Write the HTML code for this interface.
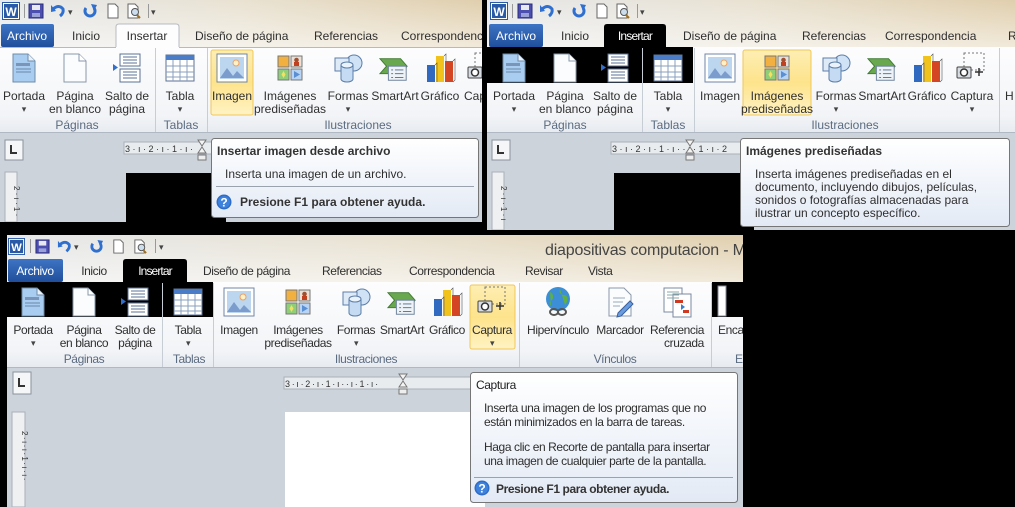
<!DOCTYPE html>
<html><head><meta charset="utf-8">
<style>
html,body{margin:0;padding:0;background:#000;width:1015px;height:507px;overflow:hidden}
svg{position:absolute;display:block}
text{font-family:"Liberation Sans",sans-serif;font-size:12px;fill:#2f2f2f}
.c{text-anchor:middle}
.g{fill:#5b6b80}
.w{fill:#fff}
.b{font-weight:bold}
.s{font-size:9px;fill:#444}
.cond text{letter-spacing:-0.4px}
</style></head><body>
<svg width="0" height="0" style="position:absolute">
<defs>
<linearGradient id="tb" x1="0" x2="1" y1="0" y2="0"><stop offset="0" stop-color="#e6e8ea"/><stop offset="0.5" stop-color="#e9e2d2"/><stop offset="1" stop-color="#e0cfae"/></linearGradient>
<linearGradient id="tbv" x1="0" x2="0" y1="0" y2="1"><stop offset="0" stop-color="#fff" stop-opacity="0"/><stop offset="1" stop-color="#fff" stop-opacity="0.55"/></linearGradient>
<linearGradient id="rb" x1="0" x2="0" y1="0" y2="1"><stop offset="0" stop-color="#fdfdfe"/><stop offset="0.8" stop-color="#f2f4f7"/><stop offset="1" stop-color="#e7ebf0"/></linearGradient>
<linearGradient id="ar" x1="0" x2="0" y1="0" y2="1"><stop offset="0" stop-color="#3e74c4"/><stop offset="1" stop-color="#1f4f9c"/></linearGradient>
<linearGradient id="hl" x1="0" x2="0" y1="0" y2="1"><stop offset="0" stop-color="#fdeeb3"/><stop offset="0.5" stop-color="#fde38b"/><stop offset="1" stop-color="#fff3c4"/></linearGradient>
<linearGradient id="tt" x1="0" x2="0" y1="0" y2="1"><stop offset="0" stop-color="#ffffff"/><stop offset="1" stop-color="#e3eaf5"/></linearGradient>
<symbol id="iW" viewBox="0 0 18 18"><rect x="0.5" y="0.5" width="17" height="17" fill="#fff" stroke="#2a5aa6"/><rect x="2" y="2" width="14" height="14" fill="#2a5aa6"/><text x="9" y="14" class="c w b" style="font-size:12px">W</text></symbol>
<symbol id="iSave" viewBox="0 0 16 16"><rect x="1" y="1" width="14" height="14" fill="#4d4fb0" stroke="#2a2c7a"/><rect x="4" y="2" width="8" height="5" fill="#e8e8f0"/><rect x="4" y="10" width="8" height="4" fill="#9aa0d8"/></symbol>
<symbol id="iUndo" viewBox="0 0 16 16"><path d="M3 6 Q9 1 13 6 Q14 10 10 13" fill="none" stroke="#2f6fcf" stroke-width="3"/><path d="M1 2 L6 8 L1 9z" fill="#2f6fcf"/></symbol>
<symbol id="iRedo" viewBox="0 0 16 16"><path d="M12 5 A5 5 0 1 1 4 5" fill="none" stroke="#2f6fcf" stroke-width="3"/><path d="M9 1 L15 2 L12 8z" fill="#2f6fcf"/></symbol>
<symbol id="iDoc" viewBox="0 0 16 16"><path d="M3 1h7l3 3v11H3z" fill="#fff" stroke="#666"/></symbol>
<symbol id="iPrev" viewBox="0 0 16 16"><path d="M2 1h7l3 3v11H2z" fill="#fff" stroke="#666"/><circle cx="9" cy="9" r="3.5" fill="#cde" stroke="#555"/><path d="M11 12l3 3" stroke="#a07020" stroke-width="2"/></symbol>
<symbol id="iPort" viewBox="0 0 32 32"><path d="M5 2h15l7 7v21H5z" fill="#a9cdf0" stroke="#6f8ba8"/><path d="M20 2v7h7" fill="#e8f1fa" stroke="#6f8ba8"/><rect x="8" y="11" width="14" height="3" fill="#7a95b8"/><path d="M8 17h15M8 20h15" stroke="#6c86a8"/></symbol>
<symbol id="iBlank" viewBox="0 0 32 32"><path d="M5 2h15l7 7v21H5z" fill="#fbfcfe" stroke="#8a97a8"/><path d="M20 2v7h7" fill="#fff" stroke="#8a97a8"/></symbol>
<symbol id="iSalto" viewBox="0 0 32 32"><rect x="9" y="2" width="20" height="12" fill="#fff" stroke="#5b7394"/><path d="M12 5h14M12 8h14M12 11h14" stroke="#5b7394"/><rect x="9" y="17" width="20" height="13" fill="#fff" stroke="#5b7394"/><path d="M12 20h14M12 23h14M12 26h14" stroke="#5b7394"/><path d="M2 12l5 3.5-5 3.5z" fill="#2f6fcf"/></symbol>
<symbol id="iTabla" viewBox="0 0 32 32"><rect x="2" y="3" width="28" height="26" fill="#fff" stroke="#5b7394"/><rect x="2" y="3" width="28" height="5" fill="#4a7cc8"/><path d="M2 14h28M2 20h28M2 25h28M9 8v21M16 8v21M23 8v21" stroke="#8aa0be"/></symbol>
<symbol id="iImg" viewBox="0 0 32 32"><rect x="1" y="2" width="30" height="28" fill="#fff" stroke="#6f86a6"/><rect x="4" y="5" width="24" height="22" fill="#bcd6ef"/><circle cx="20" cy="11" r="3" fill="#fff2c8" stroke="#f0a060"/><path d="M4 26 L11 16 L17 24 L21 19 L28 26z" fill="#7b9ccc"/></symbol>
<symbol id="iClip" viewBox="0 0 32 32"><rect x="4" y="4" width="11" height="11" fill="#f2b040" stroke="#777"/><rect x="17" y="4" width="11" height="11" fill="#e9e0d8" stroke="#777"/><circle cx="22.5" cy="8" r="2.3" fill="#a05030"/><rect x="20" y="10" width="5" height="4" fill="#c04020"/><rect x="4" y="17" width="11" height="11" fill="#8fcf7a" stroke="#777"/><path d="M9.5 19l2 3.5-2 3.5-2-3.5z" fill="#f6e060"/><rect x="17" y="17" width="11" height="11" fill="#b8d4f2" stroke="#777"/><path d="M20 19l6 3.5-6 3.5z" fill="#5a8fd4"/></symbol>
<symbol id="iFormas" viewBox="0 0 32 32"><circle cx="22" cy="11" r="8" fill="#cfe2f6" stroke="#5c7ea8"/><rect x="3" y="6" width="14" height="13" fill="#dfeaf7" stroke="#5c7ea8"/><path d="M9 13v14a6 3 0 0 0 12 0V13" fill="#c4dbf3" stroke="#5c7ea8"/><ellipse cx="15" cy="13" rx="6" ry="3" fill="#eaf3fc" stroke="#5c7ea8"/></symbol>
<symbol id="iSmart" viewBox="0 0 32 32"><path d="M1 5h22l7 8-7 8H1l7-8z" fill="#69a84f" stroke="#3f7a30"/><rect x="10" y="13" width="19" height="15" fill="#eef3f8" stroke="#6a7f98"/><path d="M13 17h2M17 17h9M13 21h2M17 21h9M13 25h2M17 25h9" stroke="#50698a"/></symbol>
<symbol id="iGraf" viewBox="0 0 32 32"><rect x="3" y="13" width="8" height="17" fill="#2f6ac0"/><rect x="12" y="4" width="8" height="26" fill="#f2c21c"/><rect x="21" y="9" width="8" height="21" fill="#d44524"/><path d="M11 13l2-2v19M20 4l2-2v7M29 9l2-2v21l-2 2" fill="none" stroke="#555" stroke-width="0.6"/></symbol>
<symbol id="iCapt" viewBox="0 0 32 32"><rect x="9" y="1" width="20" height="17" fill="none" stroke="#777" stroke-dasharray="2 2"/><rect x="2" y="15" width="14" height="11" rx="1" fill="#d8dde4" stroke="#444"/><circle cx="9" cy="20.5" r="3.5" fill="#fff" stroke="#333" stroke-width="1.5"/><path d="M20 20h8M24 16v8" stroke="#333" stroke-width="1.5"/></symbol>
<symbol id="iGlobe" viewBox="0 0 32 32"><circle cx="16" cy="13" r="12" fill="#3c8fd6"/><path d="M8 6q5 3 2 8q-4 2-1 6M18 3q-2 5 4 6q5 1 3 7q-3 3-1 6" fill="#5fb040"/><path d="M8 26a4 3 0 1 1 8 0a4 3 0 1 1-8 0M16 26a4 3 0 1 1 8 0a4 3 0 1 1-8 0" fill="none" stroke="#555" stroke-width="2"/></symbol>
<symbol id="iMarc" viewBox="0 0 32 32"><path d="M5 2h15l7 7v21H5z" fill="#fbfcfe" stroke="#8a97a8"/><path d="M9 12h12M9 16h10M9 20h7" stroke="#9ab"/><path d="M14 27l12-12 3 3-12 12-4 1z" fill="#6a9de0" stroke="#3a60a0"/></symbol>
<symbol id="iRef" viewBox="0 0 32 32"><rect x="3" y="2" width="18" height="24" fill="#fff" stroke="#7a8aa0"/><rect x="12" y="8" width="18" height="23" fill="#fff" stroke="#7a8aa0"/><path d="M6 6h12M6 9h12M6 12h12" stroke="#8aa"/><rect x="14" y="14" width="8" height="3" fill="#d03a20"/><rect x="22" y="24" width="6" height="3" fill="#d03a20"/><path d="M20 18l4 3-4 3z" fill="#3a7fd0"/></symbol>
<symbol id="iHelp" viewBox="0 0 16 16"><circle cx="8" cy="8" r="7.5" fill="#2d6cc8"/><circle cx="8" cy="8" r="6" fill="#3d82dc"/><text x="8" y="12.5" class="c w b" style="font-size:12px">?</text></symbol>
</defs></svg>

<!-- PANEL A -->
<svg style="left:0;top:0" width="482" height="222" viewBox="0 0 482 222">
<rect width="482" height="47" fill="url(#tb)"/><rect width="482" height="47" fill="url(#tbv)"/>
<use href="#iW" x="2" y="2" width="18" height="18"/>
<rect x="24" y="4" width="1" height="14" fill="#999"/>
<use href="#iSave" x="28" y="3" width="16" height="16"/>
<use href="#iUndo" x="50" y="3" width="16" height="16"/><text x="68" y="15" class="s">▾</text>
<use href="#iRedo" x="82" y="3" width="16" height="16"/>
<use href="#iDoc" x="105" y="3" width="16" height="16"/>
<use href="#iPrev" x="126" y="3" width="16" height="16"/>
<rect x="148" y="4" width="1" height="14" fill="#999"/><text x="151" y="15" class="s">▾</text>
<rect x="1" y="24" width="53" height="23" rx="2" fill="url(#ar)"/><text x="27" y="40" class="c w">Archivo</text>
<text x="86" y="40" class="c">Inicio</text>
<path d="M116 48V27q0-3 3-3h57q3 0 3 3v21" fill="#fdfdfe" stroke="#b6bac0"/><text x="147" y="40" class="c">Insertar</text>
<text x="195" y="40">Diseño de página</text>
<text x="314" y="40">Referencias</text>
<text x="401" y="40">Correspondencia</text>
<rect y="47" width="482" height="86" fill="url(#rb)"/><path d="M0 47.5h116M179 47.5h303" stroke="#b6bac0"/>
<rect y="132" width="482" height="1" fill="#b0b8c4"/>
<path d="M155.5 48v84M207.5 48v84" stroke="#c7cdd5"/>
<rect x="211" y="50" width="42" height="65" rx="2" fill="url(#hl)" stroke="#f0c75a"/>
<use href="#iPort" x="8" y="52" width="32" height="32"/>
<use href="#iBlank" x="59" y="52" width="32" height="32"/>
<use href="#iSalto" x="111" y="52" width="32" height="32"/>
<use href="#iTabla" x="164" y="52" width="32" height="32"/>
<use href="#iImg" x="216" y="52" width="32" height="32"/>
<use href="#iClip" x="274" y="52" width="32" height="32"/>
<use href="#iFormas" x="332" y="52" width="32" height="32"/>
<use href="#iSmart" x="378" y="54" width="32" height="30"/>
<use href="#iGraf" x="424" y="52" width="32" height="32"/>
<use href="#iCapt" x="466" y="52" width="32" height="32"/>
<text x="24" y="100" class="c">Portada</text><text x="24" y="112" class="c s">▾</text>
<text x="75" y="100" class="c">Página</text><text x="75" y="113" class="c">en blanco</text>
<text x="127" y="100" class="c">Salto de</text><text x="127" y="113" class="c">página</text>
<text x="180" y="100" class="c">Tabla</text><text x="180" y="112" class="c s">▾</text>
<text x="232" y="100" class="c">Imagen</text>
<text x="290" y="100" class="c">Imágenes</text><text x="290" y="113" class="c">prediseñadas</text>
<text x="348" y="100" class="c">Formas</text><text x="348" y="112" class="c s">▾</text>
<text x="395" y="100" class="c">SmartArt</text>
<text x="440" y="100" class="c">Gráfico</text>
<text x="464" y="100">Captura</text>
<text x="77" y="129" class="c g">Páginas</text><text x="181" y="129" class="c g">Tablas</text><text x="358" y="129" class="c g">Ilustraciones</text>
<rect y="133" width="482" height="89" fill="#cdd3da"/>
<rect x="5" y="140" width="18" height="20" fill="#f4f6f8" stroke="#8a939e"/><path d="M11 145v8h6" stroke="#333" stroke-width="2" fill="none"/>
<rect x="124" y="142" width="95" height="12" fill="#e9ecef" stroke="#a9b0b9"/>
<text x="125" y="152" style="font-size:9px;fill:#333">3 · ı · 2 · ı · 1 · ı ·</text>
<path d="M198 140h8l-4 6zM198 153h8l-4-6z" fill="#f4f4f4" stroke="#777"/><rect x="198" y="155" width="8" height="5" fill="#eee" stroke="#777"/>
<rect x="5" y="172" width="12" height="50" fill="#eef0f2" stroke="#a9b0b9"/>
<text x="14" y="186" style="font-size:8px;fill:#333" transform="rotate(90 14 186)">2 · ı · 1 ·</text>
<rect x="126" y="173" width="100" height="49" fill="#000"/>
<rect x="211.5" y="138.5" width="267" height="79" rx="3" fill="url(#tt)" stroke="#767676"/>
<text x="217" y="155" class="b" style="fill:#333">Insertar imagen desde archivo</text>
<text x="225" y="178">Inserta una imagen de un archivo.</text>
<rect x="216" y="186" width="258" height="1" fill="#9aa3ad"/>
<use href="#iHelp" x="216" y="194" width="16" height="16"/>
<text x="240" y="206" class="b" style="fill:#333">Presione F1 para obtener ayuda.</text>
</svg>

<!-- PANEL B -->
<svg style="left:487px;top:0" width="528" height="230" viewBox="0 0 528 230">
<rect width="528" height="47" fill="url(#tb)"/><rect width="528" height="47" fill="url(#tbv)"/>
<use href="#iW" x="3" y="2" width="18" height="18"/>
<rect x="25" y="4" width="1" height="14" fill="#999"/>
<use href="#iSave" x="30" y="3" width="16" height="16"/>
<use href="#iUndo" x="52" y="3" width="16" height="16"/><text x="70" y="15" class="s">▾</text>
<use href="#iRedo" x="84" y="3" width="16" height="16"/>
<use href="#iDoc" x="107" y="3" width="16" height="16"/>
<use href="#iPrev" x="128" y="3" width="16" height="16"/>
<rect x="150" y="4" width="1" height="14" fill="#999"/><text x="153" y="15" class="s">▾</text>
<rect x="2" y="24" width="54" height="23" rx="2" fill="url(#ar)"/><text x="29" y="40" class="c w">Archivo</text>
<text x="88" y="40" class="c">Inicio</text>
<path d="M117 48V27q0-3 3-3h56q3 0 3 3v21z" fill="#000"/><text x="148" y="40" class="c w" style="letter-spacing:-0.8px">Insertar</text>
<text x="196" y="40">Diseño de página</text>
<text x="315" y="40">Referencias</text>
<text x="398" y="40">Correspondencia</text>
<text x="521" y="40">R</text>
<rect y="47" width="528" height="86" fill="url(#rb)"/>
<rect y="47" width="206" height="36" fill="#000"/>
<rect y="132" width="528" height="1" fill="#b0b8c4"/>
<path d="M155.5 48v84M207.5 48v84M512.5 48v84" stroke="#c7cdd5"/>
<rect x="256" y="50" width="68" height="65" rx="2" fill="url(#hl)" stroke="#f0c75a"/>
<use href="#iPort" x="11" y="52" width="32" height="32"/>
<use href="#iBlank" x="62" y="52" width="32" height="32"/>
<use href="#iSalto" x="112" y="52" width="32" height="32"/>
<use href="#iTabla" x="165" y="52" width="32" height="32"/>
<use href="#iImg" x="217" y="52" width="32" height="32"/>
<use href="#iClip" x="274" y="52" width="32" height="32"/>
<use href="#iFormas" x="333" y="52" width="32" height="32"/>
<use href="#iSmart" x="379" y="54" width="32" height="30"/>
<use href="#iGraf" x="424" y="52" width="32" height="32"/>
<use href="#iCapt" x="468" y="52" width="32" height="32"/>
<text x="27" y="100" class="c">Portada</text><text x="27" y="112" class="c s">▾</text>
<text x="78" y="100" class="c">Página</text><text x="78" y="113" class="c">en blanco</text>
<text x="128" y="100" class="c">Salto de</text><text x="128" y="113" class="c">página</text>
<text x="181" y="100" class="c">Tabla</text><text x="181" y="112" class="c s">▾</text>
<text x="233" y="100" class="c">Imagen</text>
<text x="290" y="100" class="c">Imágenes</text><text x="290" y="113" class="c">prediseñadas</text>
<text x="349" y="100" class="c">Formas</text><text x="349" y="112" class="c s">▾</text>
<text x="395" y="100" class="c">SmartArt</text>
<text x="440" y="100" class="c">Gráfico</text>
<text x="485" y="100" class="c">Captura</text><text x="485" y="112" class="c s">▾</text>
<text x="518" y="100">H</text>
<text x="78" y="129" class="c g">Páginas</text><text x="181" y="129" class="c g">Tablas</text><text x="358" y="129" class="c g">Ilustraciones</text>
<rect y="133" width="528" height="97" fill="#cdd3da"/>
<rect x="5" y="140" width="18" height="20" fill="#f4f6f8" stroke="#8a939e"/><path d="M11 145v8h6" stroke="#333" stroke-width="2" fill="none"/>
<rect x="124" y="142" width="135" height="12" fill="#e9ecef" stroke="#a9b0b9"/>
<text x="125" y="152" style="font-size:9px;fill:#333">3 · ı · 2 · ı · 1 · ı ·    · ı · 1 · ı · 2</text>
<path d="M199 140h8l-4 6zM199 153h8l-4-6z" fill="#f4f4f4" stroke="#777"/><rect x="199" y="155" width="8" height="5" fill="#eee" stroke="#777"/>
<rect x="5" y="172" width="12" height="58" fill="#eef0f2" stroke="#a9b0b9"/>
<text x="14" y="186" style="font-size:8px;fill:#333" transform="rotate(90 14 186)">2 · ı · 1 · ı</text>
<rect x="127" y="173" width="140" height="57" fill="#000"/>
<rect x="253.5" y="138.5" width="269" height="88" rx="3" fill="url(#tt)" stroke="#767676"/>
<text x="259" y="155" class="b" style="fill:#333">Imágenes prediseñadas</text>
<text x="268" y="178">Inserta imágenes prediseñadas en el</text>
<text x="268" y="191">documento, incluyendo dibujos, películas,</text>
<text x="268" y="204">sonidos o fotografías almacenadas para</text>
<text x="268" y="217">ilustrar un concepto específico.</text>
</svg>

<!-- PANEL C -->
<svg class="cond" style="left:7px;top:235px" width="736" height="272" viewBox="0 0 736 272">
<rect width="736" height="47" fill="url(#tb)"/><rect width="736" height="47" fill="url(#tbv)"/>
<use href="#iW" x="1" y="3" width="17" height="17"/>
<rect x="23" y="4" width="1" height="14" fill="#999"/>
<use href="#iSave" x="28" y="4" width="15" height="15"/>
<use href="#iUndo" x="50" y="4" width="15" height="15"/><text x="67" y="15" class="s">▾</text>
<use href="#iRedo" x="82" y="4" width="15" height="15"/>
<use href="#iDoc" x="104" y="4" width="15" height="15"/>
<use href="#iPrev" x="126" y="4" width="15" height="15"/>
<rect x="148" y="4" width="1" height="14" fill="#999"/><text x="152" y="15" class="s">▾</text>
<text x="538" y="20" style="font-size:16px;fill:#444;letter-spacing:-0.2px">diapositivas computacion - M</text>
<rect x="1" y="24" width="55" height="23" rx="2" fill="url(#ar)"/><text x="28" y="40" class="c w">Archivo</text>
<text x="87" y="40" class="c">Inicio</text>
<path d="M116 48V27q0-3 3-3h58q3 0 3 3v21z" fill="#000"/><text x="148" y="40" class="c w" style="letter-spacing:-0.9px">Insertar</text>
<text x="196" y="40">Diseño de página</text>
<text x="315" y="40">Referencias</text>
<text x="402" y="40">Correspondencia</text>
<text x="518" y="40">Revisar</text>
<text x="581" y="40">Vista</text>
<rect y="47" width="736" height="86" fill="url(#rb)"/>
<rect y="47" width="206" height="35" fill="#000"/>
<rect x="705" y="47" width="31" height="35" fill="#000"/>
<rect y="132" width="736" height="1" fill="#b0b8c4"/>
<path d="M155.5 48v84M206.5 48v84M512.5 48v84M704.5 48v84" stroke="#c7cdd5"/>
<rect x="463" y="50" width="45" height="64" rx="2" fill="url(#hl)" stroke="#f0c75a"/>
<use href="#iPort" x="10" y="51" width="32" height="32"/>
<use href="#iBlank" x="61" y="51" width="32" height="32"/>
<use href="#iSalto" x="112" y="51" width="32" height="32"/>
<use href="#iTabla" x="165" y="51" width="32" height="32"/>
<use href="#iImg" x="216" y="51" width="32" height="32"/>
<use href="#iClip" x="275" y="51" width="32" height="32"/>
<use href="#iFormas" x="333" y="51" width="32" height="32"/>
<use href="#iSmart" x="379" y="53" width="32" height="30"/>
<use href="#iGraf" x="424" y="51" width="32" height="32"/>
<use href="#iCapt" x="469" y="51" width="32" height="32"/>
<use href="#iGlobe" x="535" y="51" width="32" height="32"/>
<use href="#iMarc" x="597" y="51" width="32" height="32"/>
<use href="#iRef" x="654" y="51" width="32" height="32"/>
<rect x="711" y="51" width="8" height="30" fill="#fff" stroke="#889"/>
<text x="26" y="99" class="c">Portada</text><text x="26" y="111" class="c s">▾</text>
<text x="77" y="99" class="c">Página</text><text x="77" y="112" class="c">en blanco</text>
<text x="128" y="99" class="c">Salto de</text><text x="128" y="112" class="c">página</text>
<text x="181" y="99" class="c">Tabla</text><text x="181" y="111" class="c s">▾</text>
<text x="232" y="99" class="c">Imagen</text>
<text x="291" y="99" class="c">Imágenes</text><text x="291" y="112" class="c">prediseñadas</text>
<text x="349" y="99" class="c">Formas</text><text x="349" y="111" class="c s">▾</text>
<text x="395" y="99" class="c">SmartArt</text>
<text x="440" y="99" class="c">Gráfico</text>
<text x="485" y="99" class="c">Captura</text><text x="485" y="111" class="c s">▾</text>
<text x="551" y="99" class="c">Hipervínculo</text>
<text x="613" y="99" class="c">Marcador</text>
<text x="670" y="99" class="c">Referencia</text><text x="677" y="112" class="c">cruzada</text>
<text x="711" y="99">Enca</text>
<text x="77" y="128" class="c g">Páginas</text><text x="182" y="128" class="c g">Tablas</text><text x="359" y="128" class="c g">Ilustraciones</text><text x="608" y="128" class="c g">Vínculos</text><text x="728" y="128" class="g">E</text>
<rect y="133" width="736" height="139" fill="#cdd3da"/>
<rect x="6" y="137" width="18" height="22" fill="#f4f6f8" stroke="#8a939e"/><path d="M12 143v8h6" stroke="#333" stroke-width="2" fill="none"/>
<rect x="277" y="142" width="190" height="12" fill="#e9ecef" stroke="#a9b0b9"/>
<text x="278" y="152" style="font-size:9px;fill:#333">3 · ı · 2 · ı · 1 · ı ·    · ı · 1 · ı ·</text>
<path d="M392 139h8l-4 6zM392 152h8l-4-6z" fill="#f4f4f4" stroke="#777"/><rect x="392" y="154" width="8" height="5" fill="#eee" stroke="#777"/>
<rect x="5" y="177" width="13" height="95" fill="#eef0f2" stroke="#a9b0b9"/>
<text x="15" y="196" style="font-size:8px;fill:#333" transform="rotate(90 15 196)">2 · ı · ı · 1 · ı · ı ·</text>
<rect x="278" y="177" width="200" height="95" fill="#fff"/>
<rect x="463.5" y="137.5" width="267" height="130" rx="3" fill="url(#tt)" stroke="#767676"/>
<text x="469" y="154" style="fill:#222">Captura</text>
<text x="477" y="177">Inserta una imagen de los programas que no</text>
<text x="477" y="191">están minimizados en la barra de tareas.</text>
<text x="477" y="216">Haga clic en Recorte de pantalla para insertar</text>
<text x="477" y="230">una imagen de cualquier parte de la pantalla.</text>
<rect x="467" y="242" width="259" height="1" fill="#9aa3ad"/>
<use href="#iHelp" x="467" y="245" width="16" height="16"/>
<text x="489" y="258" class="b" style="fill:#333">Presione F1 para obtener ayuda.</text>
</svg>
</body></html>
